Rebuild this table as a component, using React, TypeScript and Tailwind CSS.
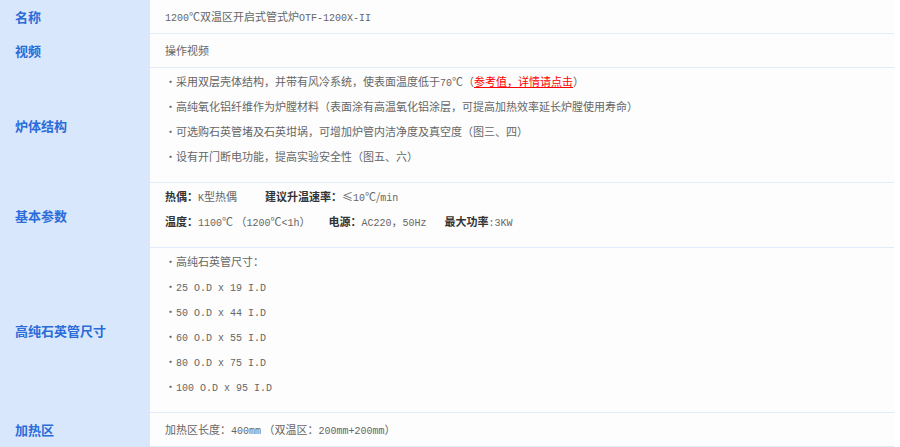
import React from 'react';

// Latin runs use a narrow mono face, like the SimSun latin glyphs in the page
function L({ children }: { children: React.ReactNode }) {
    return <span className="font-['Liberation_Mono',monospace] text-[10px] leading-none">{children}</span>;
}

function B({ children }: { children: React.ReactNode }) {
    return <span className="font-bold text-[#333]">{children}</span>;
}

function Row({ label, children, multi }: { label: string; children: React.ReactNode; multi?: boolean }) {
    return (
        <div className="flex">
            <div className="w-[150px] shrink-0 bg-[#d9e7fd] flex items-center pl-[15px]">
                <span className="text-[13px] font-bold text-[#2a6cd8]">{label}</span>
            </div>
            <div
                className={
                    multi
                        ? 'flex-1 bg-[#fdfdfd] border-b border-[#e2ebfa] pl-[15px] pt-[1px] pb-[13px]'
                        : 'flex-1 bg-[#fdfdfd] border-b border-[#e2ebfa] pl-[15px] py-[4px]'
                }
            >
                {children}
            </div>
        </div>
    );
}

function P({ children }: { children: React.ReactNode }) {
    return <p className="h-[25px] leading-[25px] whitespace-nowrap">{children}</p>;
}

export default function App() {
    return (
        <div className="w-[894px] bg-white text-[11px] text-[#666] font-['Noto_Sans_CJK_SC',sans-serif]">
            <Row label="名称">
                <P>
                    <L>1200</L>℃双温区开启式管式炉<L>OTF-1200X-II</L>
                </P>
            </Row>
            <Row label="视频">
                <P>操作视频</P>
            </Row>
            <Row label="炉体结构" multi>
                <P>
                    ・采用双层壳体结构，并带有风冷系统，使表面温度低于<L>70</L>℃（
                    <span className="text-[#f00] underline">参考值，详情请点击</span>）
                </P>
                <P>・高纯氧化铝纤维作为炉膛材料（表面涂有高温氧化铝涂层，可提高加热效率延长炉膛使用寿命）</P>
                <P>・可选购石英管堵及石英坩埚，可增加炉管内洁净度及真空度（图三、四）</P>
                <P>・设有开门断电功能，提高实验安全性（图五、六）</P>
            </Row>
            <Row label="基本参数" multi>
                <P>
                    <B>热偶：</B>
                    <L>K</L>型热偶
                    <span className="ml-[28px]">
                        <B>建议升温速率：</B>≤<L>10</L>℃/<L>min</L>
                    </span>
                </P>
                <P>
                    <B>温度：</B>
                    <L>1100</L>℃ （<L>1200</L>℃<L>&lt;1h</L>）
                    <span className="ml-[18px]">
                        <B>电源：</B>
                        <L>AC220</L>，<L>50Hz</L>
                    </span>
                    <span className="ml-[18px]">
                        <B>最大功率</B>
                        <L>:3KW</L>
                    </span>
                </P>
            </Row>
            <Row label="高纯石英管尺寸" multi>
                <P>・高纯石英管尺寸：</P>
                <P>
                    ・<L>25 O.D x 19 I.D</L>
                </P>
                <P>
                    ・<L>50 O.D x 44 I.D</L>
                </P>
                <P>
                    ・<L>60 O.D x 55 I.D</L>
                </P>
                <P>
                    ・<L>80 O.D x 75 I.D</L>
                </P>
                <P>
                    ・<L>100 O.D x 95 I.D</L>
                </P>
            </Row>
            <Row label="加热区">
                <P>
                    加热区长度：<L>400mm</L> （双温区：<L>200mm+200mm</L>）
                </P>
            </Row>
        </div>
    );
}
